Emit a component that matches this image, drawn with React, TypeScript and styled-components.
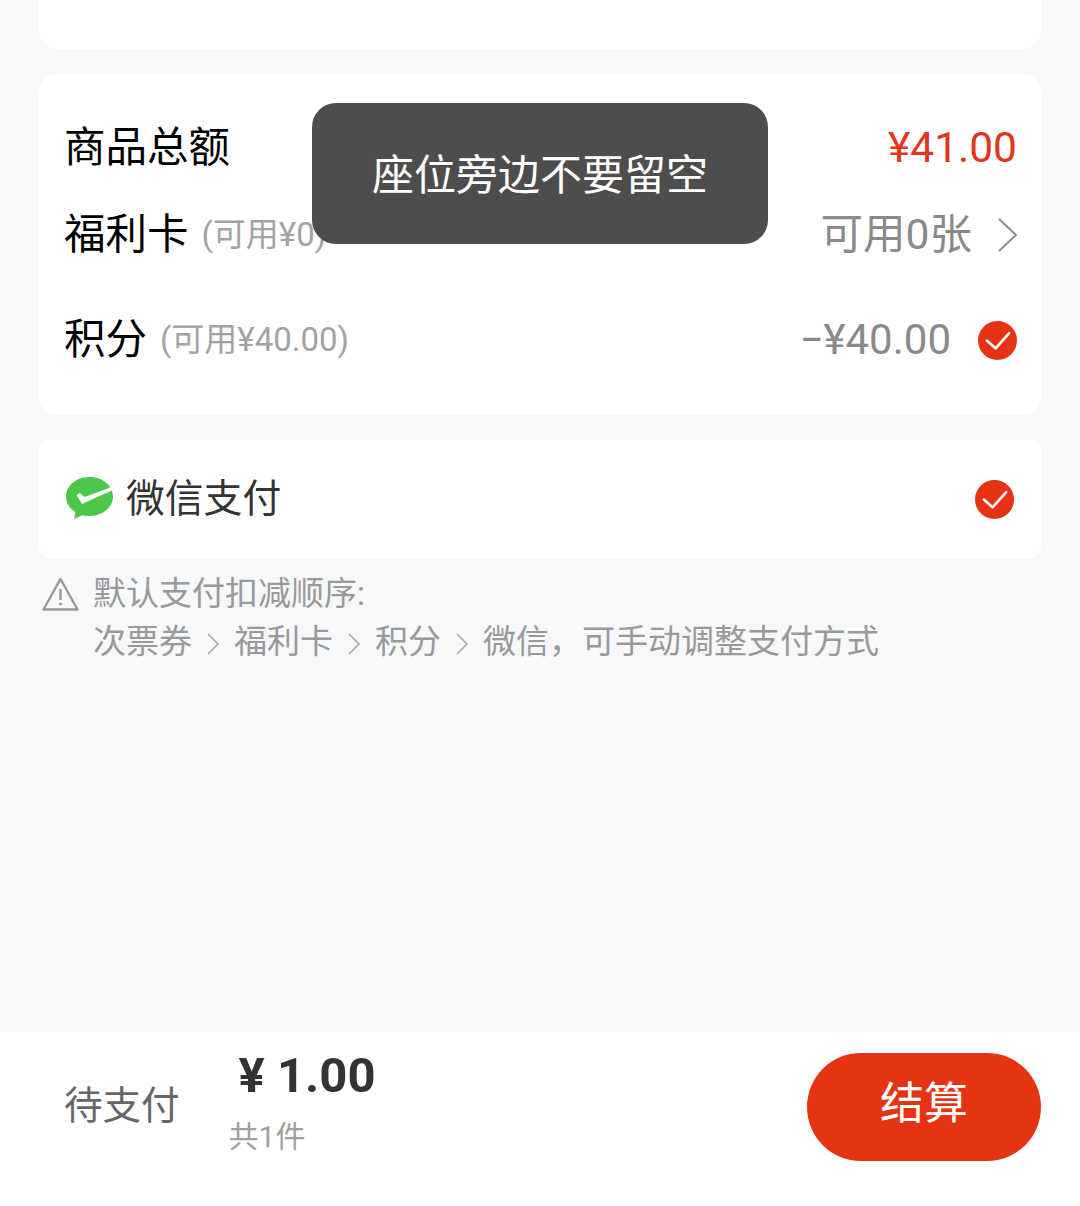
import React from "react";
import styled, { createGlobalStyle } from "styled-components";

const Global = createGlobalStyle`
  html, body { margin: 0; padding: 0; background: #f7f8fa; }
  body { font-family: Roboto, "Noto Sans CJK SC", sans-serif; }
  * { box-sizing: border-box; }
`;

const Page = styled.div`
  position: relative;
  width: 1080px;
  height: 1206px;
  overflow: hidden;
  display: flex;
  flex-direction: column;
  background: #f7f8fa;
`;

const TopCard = styled.div`
  height: 49px;
  margin: 0 39px 25px;
  background: #fff;
  border-radius: 0 0 18px 18px;
`;

const SummaryCard = styled.section`
  height: 341px;
  margin: 0 39px 25px;
  padding: 47px 24px 0 25px;
  background: #fff;
  border-radius: 18px;
  display: flex;
  flex-direction: column;
`;

const Row = styled.div<{ $height: number }>`
  height: ${(p) => p.$height}px;
  display: flex;
  align-items: flex-start;
  justify-content: space-between;
`;

const Left = styled.div`
  display: flex;
  align-items: center;
  height: 54px;
`;

const Label = styled.span`
  font-size: 41.5px;
  line-height: 54px;
  color: #000;
`;

const Hint = styled.span`
  margin-left: 13px;
  margin-top: -1px;
  font-size: 33px;
  line-height: 54px;
  color: #a3a3a3;
`;

const Right = styled.div`
  display: flex;
  align-items: center;
  height: 54px;
`;

const Total = styled.span`
  font-size: 42.5px;
  line-height: 54px;
  margin-top: -1px;
  color: #e0361c;
`;

const Muted = styled.span<{ $size: number }>`
  font-size: ${(p) => p.$size}px;
  line-height: 54px;
  color: #8a8a8a;
`;

const Chevron = styled.svg`
  width: 22px;
  height: 36px;
  margin-left: 25px;
  margin-right: -2px;
`;

const CheckWrap = styled.svg<{ $gap: number }>`
  width: 39px;
  height: 39px;
  margin-left: ${(p) => p.$gap}px;
  flex: none;
`;

const PayCard = styled.section`
  height: 119px;
  margin: 0 39px 11px;
  padding: 0 27px 0 27px;
  background: #fff;
  border-radius: 10px 10px 14px 14px;
  display: flex;
  align-items: center;
  justify-content: space-between;
`;

const PayLeft = styled.div`
  display: flex;
  align-items: center;
`;

const WeChatLogo = styled.svg`
  width: 47px;
  height: 42px;
  margin-top: -3px;
  flex: none;
`;

const PayName = styled.span`
  margin-left: 13px;
  margin-top: -1px;
  font-size: 38.8px;
  line-height: 54px;
  color: #333;
`;

const Note = styled.div`
  display: flex;
  margin: 0 0 0 42px;
  flex: 1;
`;

const WarnIcon = styled.svg`
  width: 37px;
  height: 34px;
  margin-top: 7px;
  flex: none;
`;

const NoteText = styled.div`
  margin-left: 14px;
  font-size: 33px;
  line-height: 48px;
  color: #999;
`;

const NoteLine = styled.div`
  display: flex;
  align-items: center;
  height: 48px;
  white-space: pre;
`;

const Sep = styled.svg`
  width: 14px;
  height: 24px;
  margin: 3px 14px 0 14px;
  flex: none;
`;

const BottomBar = styled.footer`
  height: 174px;
  padding: 21px 39px 0 64px;
  background: #fff;
  display: flex;
  align-items: flex-start;
  justify-content: space-between;
`;

const PayInfo = styled.div`
  display: flex;
  align-items: flex-start;
`;

const Due = styled.span`
  margin-top: 26px;
  font-size: 38.5px;
  line-height: 54px;
  color: #666;
`;

const Amounts = styled.div`
  margin-left: 49px;
  display: flex;
  flex-direction: column;
`;

const Amount = styled.span`
  margin-left: 10px;
  font-size: 49px;
  line-height: 46px;
  font-weight: 700;
  color: #333;
  white-space: pre;
`;

const Count = styled.span`
  margin-top: 18px;
  font-size: 30px;
  line-height: 40px;
  color: #a0a0a0;
`;

const PayButton = styled.button`
  width: 234px;
  height: 108px;
  padding: 0 0 14px;
  border: 0;
  border-radius: 54px;
  background: #e63314;
  color: #fff;
  font-family: inherit;
  font-size: 44px;
  font-weight: 400;
`;

const Toast = styled.div`
  position: absolute;
  left: 312px;
  top: 103px;
  width: 456px;
  height: 141px;
  padding-bottom: 4px;
  border-radius: 24px;
  background: #4d4d4d;
  color: #fff;
  font-size: 42px;
  display: flex;
  align-items: center;
  justify-content: center;
`;

const Check = ({ gap }: { gap: number }) => (
  <CheckWrap $gap={gap} viewBox="0 0 40 40">
    <circle cx="20" cy="20" r="20" fill="#e63314" />
    <path d="M9 20l9 8L32 12.500" fill="none" stroke="#fff" strokeWidth="2.600" strokeLinecap="round" strokeLinejoin="round" />
  </CheckWrap>
);

const Arrow = () => (
  <Sep viewBox="0 0 14 24">
    <path d="M2 2l10 10L2 22" fill="none" stroke="#aaa" strokeWidth="1.600" />
  </Sep>
);

export default function App() {
  return (
    <Page>
      <Global />
      <TopCard />
      <SummaryCard>
        <Row $height={87}>
          <Left>
            <Label>商品总额</Label>
          </Left>
          <Right>
            <Total>¥41.00</Total>
          </Right>
        </Row>
        <Row $height={105}>
          <Left>
            <Label>福利卡</Label>
            <Hint>(可用¥0)</Hint>
          </Left>
          <Right>
            <Muted $size={42.5}>可用0张</Muted>
            <Chevron viewBox="0 0 22 36">
              <path d="M2 2l17 16L2 34" fill="none" stroke="#8c8c8c" strokeWidth="2" />
            </Chevron>
          </Right>
        </Row>
        <Row $height={54}>
          <Left>
            <Label>积分</Label>
            <Hint>(可用¥40.00)</Hint>
          </Left>
          <Right>
            <Muted $size={42}>−¥40.00</Muted>
            <Check gap={27} />
          </Right>
        </Row>
      </SummaryCard>
      <PayCard>
        <PayLeft>
          <WeChatLogo viewBox="0 0 47 42">
            <path d="M23.500 0C10.500 0 0 8.700 0 19.500c0 6.500 3.800 12.200 9.600 15.800L8 42l8.200-3.800c2.300.5 4.700.8 7.300.8C36.500 39 47 30.300 47 19.500S36.500 0 23.500 0z" fill="#4cc74a" />
            <path d="M10.500 18l3.500-2 4.500 4L47 9.500v3.500L16 27z" fill="#fff" />
          </WeChatLogo>
          <PayName>微信支付</PayName>
        </PayLeft>
        <Check gap={0} />
      </PayCard>
      <Note>
        <WarnIcon viewBox="0 0 37 34">
          <path d="M18.500 2L35.500 32.500H1.500z" fill="none" stroke="#999" strokeWidth="2.400" strokeLinejoin="round" />
          <path d="M18.500 12v11" stroke="#999" strokeWidth="2.400" />
          <circle cx="18.500" cy="27" r="1.600" fill="#999" />
        </WarnIcon>
        <NoteText>
          <NoteLine>默认支付扣减顺序:</NoteLine>
          <NoteLine>
            次票券<Arrow />福利卡<Arrow />积分<Arrow />微信，可手动调整支付方式
          </NoteLine>
        </NoteText>
      </Note>
      <BottomBar>
        <PayInfo>
          <Due>待支付</Due>
          <Amounts>
            <Amount>¥ 1.00</Amount>
            <Count>共1件</Count>
          </Amounts>
        </PayInfo>
        <PayButton>结算</PayButton>
      </BottomBar>
      <Toast>座位旁边不要留空</Toast>
    </Page>
  );
}
